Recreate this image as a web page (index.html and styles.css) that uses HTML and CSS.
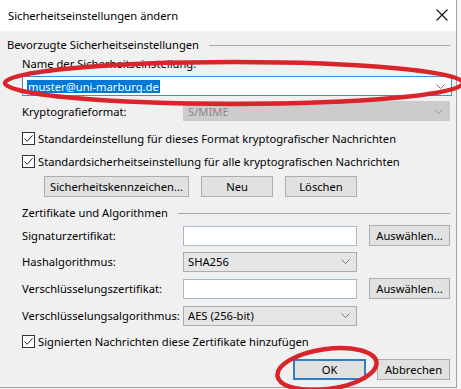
FILE: index.html
```html
<html lang="de">
<head>
  <meta charset="UTF-8">
  <title>Sicherheitseinstellungen ändern</title>
  <link rel="stylesheet" href="styles.css">
</head>
<body>

  <div class="dialog">
    <div class="titlebar">
      <span class="title">Sicherheitseinstellungen ändern</span>
      <svg class="close" width="12" height="12" viewBox="0 0 12 12">
        <path d="M0.5 0.5 L11.5 11.5 M11.5 0.5 L0.5 11.5" stroke="#111" stroke-width="1.1" fill="none"/>
      </svg>
    </div>

    <div class="content">
      <div class="group-head first">
        <span>Bevorzugte Sicherheitseinstellungen</span>
        <div class="rule"></div>
      </div>

      <div class="section">
        <div class="label-line">Name der Sicherheitseinstellung:</div>

        <div class="combo edit wide">
          <span class="selected">muster@uni-marburg.de</span>
          <svg class="chev" width="9" height="5" viewBox="0 0 9 5"><path d="M0.5 0.5 L4.5 4.5 L8.5 0.5" stroke="#777" fill="none"/></svg>
        </div>

        <div class="row krypto">
          <span class="lbl">Kryptografieformat:</span>
          <div class="combo disabled long">
            <span>S/MIME</span>
            <svg class="chev" width="9" height="5" viewBox="0 0 9 5"><path d="M0.5 0.5 L4.5 4.5 L8.5 0.5" stroke="#9a9a9a" fill="none"/></svg>
          </div>
        </div>

        <label class="check c1">
          <span class="box"><svg width="11" height="11" viewBox="0 0 11 11"><path d="M1.5 5.5 L4.2 8.3 L9.6 2.2" stroke="#222" fill="none"/></svg></span>
          Standardeinstellung für dieses Format kryptografischer Nachrichten
        </label>
        <label class="check c2">
          <span class="box"><svg width="11" height="11" viewBox="0 0 11 11"><path d="M1.5 5.5 L4.2 8.3 L9.6 2.2" stroke="#222" fill="none"/></svg></span>
          Standardsicherheitseinstellung für alle kryptografischen Nachrichten
        </label>

        <div class="btn-row">
          <button class="btn btn-label">Sicherheitskennzeichen...</button>
          <button class="btn btn-small">Neu</button>
          <button class="btn btn-small">Löschen</button>
        </div>

        <div class="group-head second">
          <span>Zertifikate und Algorithmen</span>
          <div class="rule"></div>
        </div>

        <div class="row r1">
          <span class="lbl">Signaturzertifikat:</span>
          <div class="textbox"></div>
          <button class="btn btn-pick">Auswählen...</button>
        </div>
        <div class="row r2">
          <span class="lbl">Hashalgorithmus:</span>
          <div class="combo drop">
            <span>SHA256</span>
            <svg class="chev" width="9" height="5" viewBox="0 0 9 5"><path d="M0.5 0.5 L4.5 4.5 L8.5 0.5" stroke="#777" fill="none"/></svg>
          </div>
        </div>
        <div class="row r3">
          <span class="lbl">Verschlüsselungszertifikat:</span>
          <div class="textbox"></div>
          <button class="btn btn-pick">Auswählen...</button>
        </div>
        <div class="row r4">
          <span class="lbl">Verschlüsselungsalgorithmus:</span>
          <div class="combo drop">
            <span>AES (256-bit)</span>
            <svg class="chev" width="9" height="5" viewBox="0 0 9 5"><path d="M0.5 0.5 L4.5 4.5 L8.5 0.5" stroke="#777" fill="none"/></svg>
          </div>
        </div>

        <label class="check c3">
          <span class="box"><svg width="11" height="11" viewBox="0 0 11 11"><path d="M1.5 5.5 L4.2 8.3 L9.6 2.2" stroke="#222" fill="none"/></svg></span>
          Signierten Nachrichten diese Zertifikate hinzufügen
        </label>
      </div>

      <div class="footer">
        <button class="btn btn-foot default">OK</button>
        <button class="btn btn-foot">Abbrechen</button>
      </div>
    </div>

    <!-- red marks drawn over the dialog -->
    <svg class="marks" width="470" height="400" viewBox="0 0 470 400">
      <ellipse cx="234" cy="83" rx="229" ry="21" stroke="#d9242c" stroke-width="4.5" fill="none"/>
      <ellipse cx="327" cy="369" rx="50" ry="20" transform="rotate(-8 327 369)" stroke="#d9242c" stroke-width="4.5" fill="none"/>
    </svg>
  </div>

</body>
</html>
```

FILE: styles.css
```css
html {
  background: #f7f7f7;
}
body {
  margin: 0;
  font-family: "Noto Sans", Arial, sans-serif;
  font-size: 11.2px;
  color: #000;
}
.dialog {
  position: relative;
  width: 456px;
  height: 387px;
  background: #f0f0f0;
  border-right: 1px solid #a0a0a0;
  border-bottom: 1px solid #a0a0a0;
  overflow: visible;
}
.titlebar {
  height: 31px;
  background: #fff;
  display: flex;
  align-items: center;
  justify-content: space-between;
  padding: 0 8px 0 8px;
}
.title {
  font-size: 11.2px;
  margin-top: -1px;
}
.close {
  margin-top: -2px;
}
.content {
  padding: 0 6px 0 7px;
}
.group-head {
  display: flex;
  align-items: center;
  height: 14px;
  line-height: 14px;
  gap: 10px;
}
.group-head.first {
  padding-top: 7px;
}
.group-head.second {
  margin-top: 9px;
}
.rule {
  flex: 1;
  border-top: 1px solid #a8a8a8;
  margin-top: 1px;
}
.section {
  padding-left: 15px;
}
.label-line {
  margin-top: 5px;
  height: 14px;
  line-height: 14px;
}
.combo {
  box-sizing: border-box;
  height: 20px;
  display: flex;
  align-items: center;
  justify-content: space-between;
  padding: 0 6px 0 4px;
}
.combo.edit {
  margin-top: 5px;
  width: 430px;
  background: #fff;
  border: 1px solid #3c8fd6;
}
.selected {
  background: #0078d7;
  color: #fff;
  line-height: 13px;
  padding: 0 1px;
}
.combo.disabled {
  width: 269px;
  background: #cccccc;
  border: 1px solid #cccccc;
  color: #8a8a8a;
}
.combo.drop {
  width: 174px;
  background: #e5e5e5;
  border: 1px solid #acacac;
}
.row {
  display: flex;
  align-items: center;
  height: 21px;
}
.lbl {
  width: 161px;
  flex: none;
}
.krypto {
  margin-top: 5px;
  height: 20px;
}
.check {
  display: flex;
  align-items: center;
  height: 16px;
  gap: 3px;
}
.box {
  box-sizing: border-box;
  width: 13px;
  height: 13px;
  border: 1px solid #333;
  background: #fff;
  display: flex;
  align-items: center;
  justify-content: center;
}
.c1 { margin-top: 9px; }
.c2 { margin-top: 7px; }
.c3 { margin-top: 7px; }
.btn {
  box-sizing: border-box;
  height: 21px;
  background: #e1e1e1;
  border: 1px solid #adadad;
  font-family: inherit;
  font-size: 11.2px;
  color: #000;
  padding: 0;
}
.btn-row {
  display: flex;
  gap: 12px;
  margin-top: 7px;
  padding-left: 22px;
}
.btn-label { width: 145px; }
.btn-small { width: 72px; }
.btn-pick {
  width: 81px;
  margin-left: 12px;
}
.textbox {
  box-sizing: border-box;
  width: 174px;
  height: 20px;
  background: #fff;
  border: 1px solid #a9b9cc;
}
.r1 { margin-top: 5px; }
.r2 { margin-top: 5px; }
.r3 { margin-top: 6px; }
.r4 { margin-top: 6px; }
.footer {
  display: flex;
  justify-content: flex-end;
  gap: 11px;
  margin-top: 10px;
}
.btn-foot {
  width: 73px;
}
.btn-foot.default {
  border: 2px solid #2e7fc6;
}
.marks {
  position: absolute;
  left: 0;
  top: 0;
  pointer-events: none;
}
```
